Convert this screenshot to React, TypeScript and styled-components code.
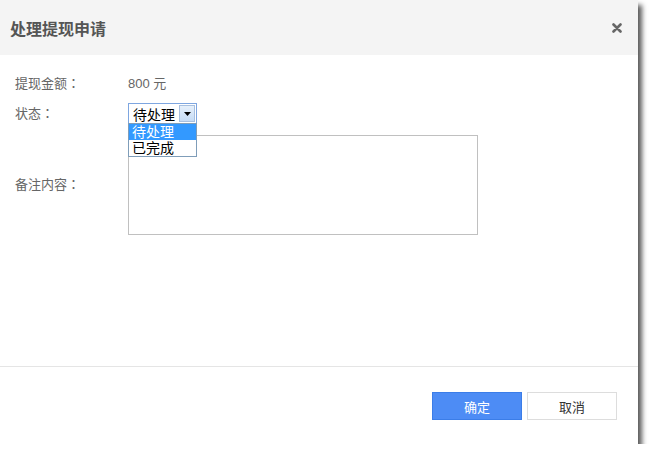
import React from 'react';
import styled, { createGlobalStyle } from 'styled-components';

const GlobalStyle = createGlobalStyle`
  html, body {
    margin: 0;
    padding: 0;
    background: #ffffff;
  }
  body {
    font-family: "Liberation Sans", "Noto Sans CJK SC", sans-serif;
    text-spacing-trim: space-all;
  }
`;

const Dialog = styled.div`
  width: 638px;
  height: 444px;
  background: #ffffff;
  display: flex;
  flex-direction: column;
  box-shadow: 4px 5px 5px rgba(0, 0, 0, 0.65);
`;

const Header = styled.div`
  height: 55px;
  background: #f4f4f4;
  display: flex;
  align-items: center;
  justify-content: space-between;
  padding: 0 15px 0 10px;
  box-sizing: border-box;
`;

const Title = styled.h3`
  margin: 0;
  font-size: 16px;
  font-weight: bold;
  color: #555555;
  font-family: "Liberation Sans", "Noto Sans CJK SC", sans-serif;
`;

const CloseButton = styled.button`
  border: none;
  background: none;
  padding: 0;
  width: 12px;
  height: 12px;
  display: flex;
  align-items: center;
  justify-content: center;
  cursor: pointer;
`;

const Body = styled.div`
  flex: 1;
  padding: 19px 0 0 15px;
  display: grid;
  grid-template-columns: 113px 1fr;
  grid-auto-rows: min-content;
  align-items: center;
`;

const Label = styled.div<{ $gap?: number }>`
  font-size: 13px;
  line-height: 20px;
  color: #666666;
  font-family: "Liberation Sans", "Noto Sans CJK TC", sans-serif;
  margin-top: ${(p) => p.$gap ?? 0}px;
`;

const Value = styled.div`
  font-size: 13px;
  line-height: 20px;
  color: #666666;
`;

const Field = styled.div<{ $gap?: number }>`
  margin-top: ${(p) => p.$gap ?? 0}px;
  position: relative;
`;

const SelectBox = styled.div`
  width: 69px;
  height: 21px;
  box-sizing: border-box;
  border: 1px solid #7ea6e0;
  display: flex;
  align-items: center;
  justify-content: space-between;
  padding: 0 1px 0 4px;
  font-size: 14px;
  color: #000000;
  background: #ffffff;
`;

const SelectArrow = styled.div`
  width: 16px;
  height: 17px;
  box-sizing: border-box;
  border: 1px solid #a8c0e0;
  background: linear-gradient(#e6f0fb, #c6dcf6);
  display: flex;
  align-items: center;
  justify-content: center;
`;

const OptionList = styled.div`
  position: absolute;
  left: 0;
  top: 20px;
  width: 69px;
  box-sizing: border-box;
  border: 1px solid #7f9db9;
  background: #ffffff;
  z-index: 2;
`;

const Option = styled.div<{ $active?: boolean }>`
  height: 16px;
  line-height: 16px;
  padding-left: 3px;
  font-size: 14px;
  color: ${(p) => (p.$active ? '#ffffff' : '#000000')};
  background: ${(p) => (p.$active ? '#3399ff' : 'transparent')};
`;

const TextArea = styled.textarea`
  display: block;
  width: 350px;
  height: 100px;
  box-sizing: border-box;
  border: 1px solid #c0c0c0;
  resize: none;
  outline: none;
  margin: 0;
`;

const Footer = styled.div`
  border-top: 1px solid #e5e5e5;
  height: 78px;
  box-sizing: border-box;
  display: flex;
  justify-content: flex-end;
  gap: 5px;
  padding: 25px 21px 0 0;
`;

const Button = styled.button<{ $primary?: boolean }>`
  width: 90px;
  height: 28px;
  box-sizing: border-box;
  font-size: 13px;
  font-family: "Liberation Sans", "Noto Sans CJK SC", sans-serif;
  border: 1px solid ${(p) => (p.$primary ? '#3b7de8' : '#dddddd')};
  background: ${(p) => (p.$primary ? '#4d8cf5' : '#ffffff')};
  color: ${(p) => (p.$primary ? '#ffffff' : '#333333')};
  cursor: pointer;
`;

const App: React.FC = () => {
  return (
    <>
      <GlobalStyle />
      <Dialog>
        <Header>
          <Title>处理提现申请</Title>
          <CloseButton aria-label="关闭">
            <svg width="10" height="10" viewBox="0 0 10 10">
              <path d="M1.5 1.5 L8.5 8.5 M8.5 1.5 L1.5 8.5" stroke="#666" strokeWidth="2.6" strokeLinecap="round" />
            </svg>
          </CloseButton>
        </Header>
        <Body>
          <Label>提现金额：</Label>
          <Value>800 元</Value>

          <Label $gap={9}>状态：</Label>
          <Field $gap={9}>
            <SelectBox>
              <span>待处理</span>
              <SelectArrow>
                <svg width="7" height="4" viewBox="0 0 7 4">
                  <path d="M0 0 H7 L3.5 4 Z" fill="#000" />
                </svg>
              </SelectArrow>
            </SelectBox>
            <OptionList>
              <Option $active>待处理</Option>
              <Option>已完成</Option>
            </OptionList>
          </Field>

          <Label $gap={11}>备注内容：</Label>
          <Field $gap={11}>
            <TextArea />
          </Field>
        </Body>
        <Footer>
          <Button $primary>确定</Button>
          <Button>取消</Button>
        </Footer>
      </Dialog>
    </>
  );
};

export default App;
